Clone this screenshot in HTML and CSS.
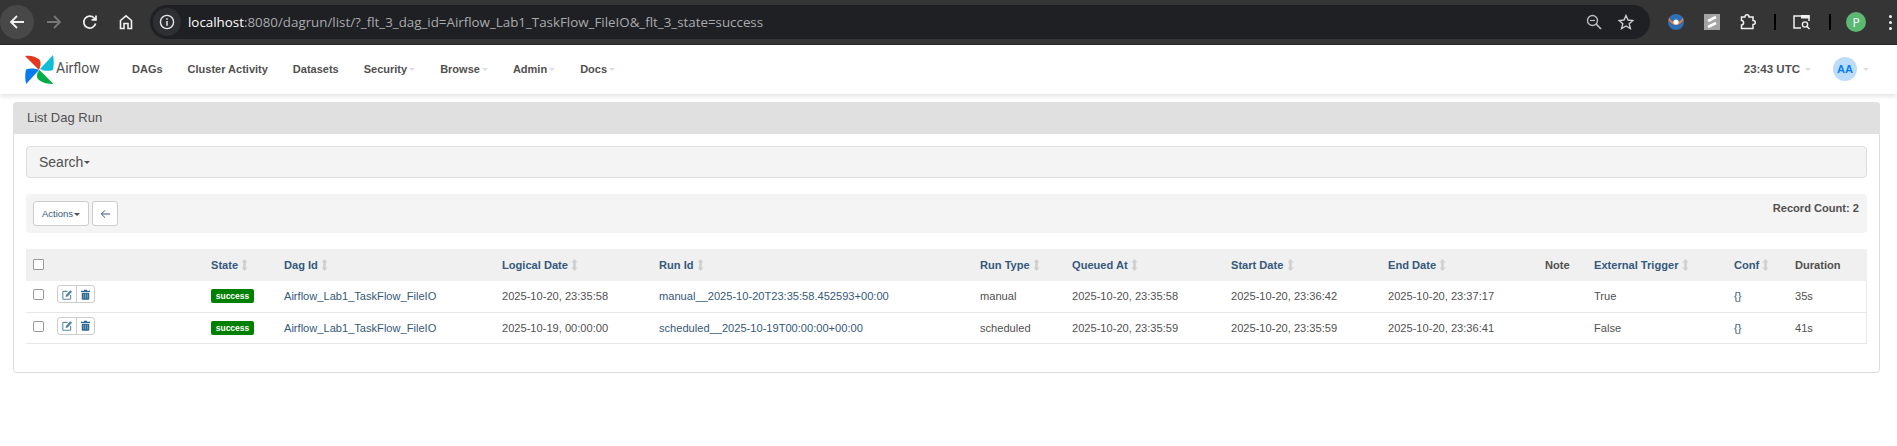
FILE: index.html
```html
<!DOCTYPE html>
<html>
<head>
  <title>List Dag Run</title>
  <link rel="stylesheet" href="styles.css">
</head>
<body>

  <svg class="defs">
    <defs>
      <symbol id="sort" viewBox="0 0 7 14">
        <path d="M3.5 0 L7 4 H5 V10 H7 L3.5 14 L0 10 H2 V4 H0 Z" fill="#cfcfcf"/>
      </symbol>
      <symbol id="edit" viewBox="0 0 14 14">
        <path d="M11 7.5 V12 Q11 13 10 13 H2 Q1 13 1 12 V4 Q1 3 2 3 H7" fill="none" stroke="#5b8cad" stroke-width="1.4"/>
        <path d="M5 7.5 L10.5 1.5 L12.8 3.6 L7.2 9.6 L4.6 10.1 Z" fill="#4f84a8"/>
      </symbol>
      <symbol id="trash" viewBox="0 0 12 14">
        <path d="M0 2 H4 V0.5 H8 V2 H12 V3.5 H0 Z M1 4.5 H11 V13 Q11 14 10 14 H2 Q1 14 1 13 Z" fill="#2f6a92"/>
        <path d="M3.5 6 V12 M6 6 V12 M8.5 6 V12" stroke="#9cbdd3" stroke-width="0.8"/>
      </symbol>
    </defs>
  </svg>

  <div class="chrome">
    <div class="chrome-nav">
      <span class="round-btn">
        <svg width="16" height="16" viewBox="0 0 16 16"><path d="M15 8 H2 M8 2 L2 8 L8 14" fill="none" stroke="#f1f1f1" stroke-width="1.8"/></svg>
      </span>
      <span class="plain-btn">
        <svg width="16" height="16" viewBox="0 0 16 16"><path d="M1 8 H14 M8 2 L14 8 L8 14" fill="none" stroke="#777" stroke-width="1.8"/></svg>
      </span>
      <span class="plain-btn">
        <svg width="16" height="16" viewBox="0 0 16 16"><path d="M13.6 9.5 A6 6 0 1 1 12 3.8 L14 5.6 M14 1.4 V5.8 H9.6" fill="none" stroke="#f1f1f1" stroke-width="1.7"/></svg>
      </span>
      <span class="plain-btn">
        <svg width="16" height="16" viewBox="0 0 16 16"><path d="M2.5 14.5 V6.5 L8 1.8 L13.5 6.5 V14.5 H10 V9.5 H6 V14.5 Z" fill="none" stroke="#f1f1f1" stroke-width="1.6"/></svg>
      </span>
    </div>
    <div class="omnibox">
      <span class="site-info">
        <svg width="16" height="16" viewBox="0 0 16 16"><circle cx="8" cy="8" r="6.6" fill="none" stroke="#e8e8e8" stroke-width="1.4"/><path d="M8 7 V11.8 M8 4.2 V5.8" stroke="#e8e8e8" stroke-width="1.5"/></svg>
      </span>
      <span class="url"><span class="url-host">localhost</span>:8080/dagrun/list/?_flt_3_dag_id=Airflow_Lab1_TaskFlow_FileIO&amp;_flt_3_state=success</span>
      <span class="omni-icons">
        <svg width="16" height="16" viewBox="0 0 16 16"><circle cx="6.5" cy="6.5" r="5" fill="none" stroke="#bbb" stroke-width="1.4"/><path d="M4 6.5 H9" stroke="#bbb" stroke-width="1.2"/><path d="M10.2 10.2 L15 15" stroke="#bbb" stroke-width="1.7"/></svg>
        <svg width="16" height="16" viewBox="0 0 16 16"><path d="M8 1.5 L10 6 L15 6.5 L11.2 9.8 L12.4 14.6 L8 12 L3.6 14.6 L4.8 9.8 L1 6.5 L6 6 Z" fill="none" stroke="#ccc" stroke-width="1.4"/></svg>
      </span>
    </div>
    <div class="chrome-ext">
      <svg class="ext" width="16" height="16" viewBox="0 0 16 16"><circle cx="8" cy="8" r="8" fill="#2f6fb5"/><path d="M1 3.5 Q3 8 8 8 Q13 8 15 3.5 L15.5 6 Q12 11 8 11 Q4 11 .5 6 Z" fill="#ef7f3a"/><circle cx="8" cy="8" r="2.6" fill="#fff"/></svg>
      <svg class="ext" width="16" height="16" viewBox="0 0 16 16"><rect width="16" height="16" fill="#a3a3a3"/><path d="M4 7 L12 3 M4 13 L12 9" stroke="#fff" stroke-width="2.6"/></svg>
      <svg class="ext ext-short" width="16" height="16" viewBox="0 0 16 16"><path d="M1.5 3 H5 Q5 .8 7 .8 Q9 .8 9 3 H13 V6.5 Q15.3 6.5 15.3 8.5 Q15.3 10.5 13 10.5 V14.5 H1.5 V11 Q3.6 11 3.6 8.8 Q3.6 6.6 1.5 6.6 Z" fill="none" stroke="#f1f1f1" stroke-width="1.5"/></svg>
      <span class="ext-divider"></span>
      <svg class="ext ext-short" width="18" height="16" viewBox="0 0 18 16"><path d="M8 14 H1 V2 H16 V7" fill="none" stroke="#f1f1f1" stroke-width="1.5"/><rect x="8" y="1" width="8.5" height="3.5" fill="#f1f1f1"/><circle cx="12" cy="10.5" r="2.6" fill="none" stroke="#f1f1f1" stroke-width="1.4"/><path d="M14 12.5 L16.5 15" stroke="#f1f1f1" stroke-width="1.5"/></svg>
      <span class="ext-divider ext-divider-last"></span>
      <span class="profile">P</span>
      <span class="dots"><i></i><i></i><i></i></span>
    </div>
  </div>

  <div class="navbar">
    <a class="brand">
      <svg width="29" height="29" viewBox="0 0 29 29">
        <path d="M0 1 L14 15 C16 10 16 7 14.500 4.500 C10 1 5 0 0 1 Z" fill="#e43921"/>
        <path d="M28 0 L15 14 C19 16 23 16.500 28 15 C29 10 29 5 28 0 Z" fill="#11bcd6"/>
        <path d="M28.500 29 L14.500 15 C11.500 18 11 23 14 25 C18 28 23 29 28.500 29 Z" fill="#00ad46"/>
        <path d="M1 29 L14 15 C10 13 5 13 1 14.500 C0 19 0 24 1 29 Z" fill="#017cee"/>
      </svg>
      <span class="brand-name">Airflow</span>
    </a>
    <ul class="menu">
      <li>DAGs</li>
      <li>Cluster Activity</li>
      <li>Datasets</li>
      <li class="has-caret">Security</li>
      <li class="has-caret">Browse</li>
      <li class="has-caret">Admin</li>
      <li class="has-caret">Docs</li>
    </ul>
    <div class="nav-right">
      <span class="clock has-caret">23:43 UTC</span>
      <span class="user has-caret"><span class="avatar">AA</span></span>
    </div>
  </div>

  <div class="main">
    <div class="panel">
      <div class="panel-heading">List Dag Run</div>
      <div class="panel-body">

        <div class="search-box"><span class="search-toggle">Search</span><span class="dark-caret"></span></div>

        <div class="actions-bar">
          <button class="btn btn-actions">Actions<span class="dark-caret"></span></button>
          <button class="btn btn-back">
            <svg width="10" height="10" viewBox="0 0 11 10"><path d="M11 5 H1.500 M5.500 1 L1.500 5 L5.500 9" fill="none" stroke="#35597c" stroke-width="1.100"/></svg>
          </button>
          <span class="record-count">Record Count: 2</span>
        </div>

        <table class="runs">
          <colgroup>
            <col class="c-check"><col class="c-act"><col class="c-state"><col class="c-dag"><col class="c-logical"><col class="c-run"><col class="c-type"><col class="c-queued"><col class="c-start"><col class="c-end"><col class="c-note"><col class="c-ext"><col class="c-conf"><col class="c-dur">
          </colgroup>
          <thead>
            <tr>
              <th><input class="cb cb-head" type="checkbox"></th>
              <th></th>
              <th class="lnk">State <svg class="sort"><use href="#sort"/></svg></th>
              <th class="lnk">Dag Id <svg class="sort"><use href="#sort"/></svg></th>
              <th class="lnk">Logical Date <svg class="sort"><use href="#sort"/></svg></th>
              <th class="lnk">Run Id <svg class="sort"><use href="#sort"/></svg></th>
              <th class="lnk">Run Type <svg class="sort"><use href="#sort"/></svg></th>
              <th class="lnk">Queued At <svg class="sort"><use href="#sort"/></svg></th>
              <th class="lnk">Start Date <svg class="sort"><use href="#sort"/></svg></th>
              <th class="lnk">End Date <svg class="sort"><use href="#sort"/></svg></th>
              <th>Note</th>
              <th class="lnk">External Trigger <svg class="sort"><use href="#sort"/></svg></th>
              <th class="lnk">Conf <svg class="sort"><use href="#sort"/></svg></th>
              <th>Duration</th>
            </tr>
          </thead>
          <tbody>
            <tr>
              <td><input class="cb" type="checkbox"></td>
              <td><span class="row-btns"><span><svg class="i-edit"><use href="#edit"/></svg></span><span><svg class="i-trash"><use href="#trash"/></svg></span></span></td>
              <td><span class="badge">success</span></td>
              <td class="lnk">Airflow_Lab1_TaskFlow_FileIO</td>
              <td>2025-10-20, 23:35:58</td>
              <td class="lnk">manual__2025-10-20T23:35:58.452593+00:00</td>
              <td>manual</td>
              <td>2025-10-20, 23:35:58</td>
              <td>2025-10-20, 23:36:42</td>
              <td>2025-10-20, 23:37:17</td>
              <td></td>
              <td>True</td>
              <td class="lnk">{}</td>
              <td>35s</td>
            </tr>
            <tr>
              <td><input class="cb" type="checkbox"></td>
              <td><span class="row-btns"><span><svg class="i-edit"><use href="#edit"/></svg></span><span><svg class="i-trash"><use href="#trash"/></svg></span></span></td>
              <td><span class="badge">success</span></td>
              <td class="lnk">Airflow_Lab1_TaskFlow_FileIO</td>
              <td>2025-10-19, 00:00:00</td>
              <td class="lnk">scheduled__2025-10-19T00:00:00+00:00</td>
              <td>scheduled</td>
              <td>2025-10-20, 23:35:59</td>
              <td>2025-10-20, 23:35:59</td>
              <td>2025-10-20, 23:36:41</td>
              <td></td>
              <td>False</td>
              <td class="lnk">{}</td>
              <td>41s</td>
            </tr>
          </tbody>
        </table>

      </div>
    </div>
  </div>

</body>
</html>
```

FILE: styles.css
```css
* {
  box-sizing: border-box;
}
html, body {
  margin: 0;
  padding: 0;
  height: 100%;
  overflow: hidden;
}
body {
  background-color: #fff;
  color: #51504f;
  font-family: "Liberation Sans", Arial, sans-serif;
  font-size: 11.100px;
}
.defs {
  display: none;
}

/* browser bar */
.chrome {
  display: flex;
  align-items: center;
  height: 45px;
  background-color: #353535;
  border-bottom: 1px solid #2a2a2a;
}
.chrome-nav {
  display: flex;
  align-items: center;
  width: 150px;
}
.round-btn, .plain-btn {
  display: flex;
  align-items: center;
  justify-content: center;
  width: 36px;
  height: 34px;
}
.round-btn {
  width: 34px;
  margin-right: 2px;
  border-radius: 50%;
  background-color: #484848;
}
.omnibox {
  display: flex;
  align-items: center;
  width: 1500px;
  height: 34px;
  border-radius: 17px;
  background-color: #1f2023;
}
.site-info {
  display: flex;
  align-items: center;
  justify-content: center;
  width: 28px;
  height: 28px;
  margin: 0 7px 0 3px;
  border-radius: 50%;
  background-color: #2e2f32;
}
.url {
  flex: 1;
  color: #a9abae;
  font-family: "Open Sans", sans-serif;
  font-size: 13.350px;
}
.url-host {
  color: #fff;
}
.omni-icons {
  display: flex;
  align-items: center;
  gap: 16px;
  margin-right: 16px;
}
.chrome-ext {
  display: flex;
  align-items: center;
  flex: 1;
  padding-left: 18px;
}
.ext {
  margin-right: 20px;
}
.ext-short {
  margin-right: 18px;
}
.ext-divider {
  width: 2px;
  height: 16px;
  margin-right: 17px;
  background-color: #000;
}
.ext-divider-last {
  margin-right: 15px;
}
.profile {
  display: flex;
  align-items: center;
  justify-content: center;
  width: 20px;
  height: 20px;
  margin-right: 23px;
  border-radius: 50%;
  background-color: #5bb974;
  color: #fff;
  font-family: "Open Sans", sans-serif;
  font-size: 12px;
}
.dots {
  display: flex;
  flex-direction: column;
  gap: 3px;
}
.dots i {
  width: 3px;
  height: 3px;
  background-color: #f1f1f1;
  border-radius: 50%;
}

/* airflow navbar */
.navbar {
  display: flex;
  align-items: center;
  height: 49px;
  padding: 0 0 0 25px;
  background-color: #fff;
  box-shadow: 0 2px 5px rgba(0, 0, 0, 0.12);
}
.brand {
  display: flex;
  align-items: center;
  width: 107px;
  color: #51504f;
}
.brand-name {
  margin-left: 2px;
  padding-bottom: 3px;
  font-family: Roboto, sans-serif;
  font-size: 14px;
}
.menu {
  display: flex;
  flex: 1;
  margin: 0;
  padding: 0 0 2px;
  list-style: none;
  font-size: 11px;
  font-weight: bold;
}
.menu li {
  margin-right: 25px;
}
.has-caret::after {
  content: "";
  display: inline-block;
  margin-left: 2px;
  vertical-align: middle;
  border-top: 3px solid #e6d9e6;
  border-left: 3px solid transparent;
  border-right: 3px solid transparent;
}
.nav-right {
  display: flex;
  align-items: center;
  padding: 0 28px 2px 0;
}
.clock {
  margin-right: 22px;
  font-size: 11.500px;
  font-weight: bold;
}
.clock::after {
  margin-left: 5px;
}
.user::after {
  margin-left: 6px;
}
.avatar {
  display: inline-block;
  width: 24px;
  height: 24px;
  line-height: 24px;
  border-radius: 50%;
  background-color: #bcdcfb;
  color: #017cee;
  font-size: 11px;
  font-weight: bold;
  text-align: center;
}

/* page content */
.main {
  padding: 8px 17px 0 13px;
}
.panel {
  height: 271px;
  border: 1px solid #ddd;
  border-radius: 4px;
}
.panel-heading {
  height: 32px;
  margin: -1px -1px 0;
  padding-left: 14px;
  border-radius: 4px 4px 0 0;
  background-color: #e0e0e0;
  font-size: 13px;
  line-height: 32px;
}
.panel-body {
  padding: 12px 12px 0;
}
.search-box {
  display: flex;
  align-items: center;
  height: 32px;
  padding-left: 12px;
  border: 1px solid #ddd;
  border-radius: 4px;
  background-color: #f4f4f4;
  font-size: 14px;
}
.dark-caret {
  display: inline-block;
  margin-left: 1px;
  vertical-align: middle;
  border-top: 3px solid #51504f;
  border-left: 3px solid transparent;
  border-right: 3px solid transparent;
}
.actions-bar {
  display: flex;
  align-items: center;
  height: 39px;
  margin-top: 16px;
  padding: 0 8px 0 7px;
  border-radius: 4px;
  background-color: #f4f4f4;
}
.btn {
  height: 25px;
  padding: 0;
  border: 1px solid #ccc;
  border-radius: 3px;
  background-color: #fff;
  color: #35597c;
  font-family: inherit;
  font-size: 9.500px;
}
.btn-actions {
  width: 56px;
  margin-right: 3px;
}
.btn-back {
  display: flex;
  align-items: center;
  justify-content: center;
  width: 26px;
}
.record-count {
  margin-left: auto;
  margin-bottom: 11px;
  font-weight: bold;
}
.runs {
  width: 100%;
  margin-top: 16px;
  border-collapse: collapse;
  table-layout: fixed;
}
.c-check { width: 31px; }
.c-act { width: 146px; }
.c-state { width: 73px; }
.c-dag { width: 218px; }
.c-logical { width: 157px; }
.c-run { width: 321px; }
.c-type { width: 92px; }
.c-queued { width: 159px; }
.c-start { width: 157px; }
.c-end { width: 157px; }
.c-note { width: 49px; }
.c-ext { width: 140px; }
.c-conf { width: 61px; }
.c-dur { width: auto; }
.runs th {
  height: 32px;
  padding: 0 8px;
  background-color: #f0f0f0;
  font-weight: bold;
  text-align: left;
  white-space: nowrap;
}
.runs td {
  height: 31px;
  padding: 0 8px;
  border-bottom: 1px solid #e8e8e8;
  white-space: nowrap;
}
.runs tr td:last-child {
  border-right: 1px solid #e8e8e8;
}
.runs .lnk {
  color: #35597c;
}
.sort {
  width: 7px;
  height: 12px;
  vertical-align: -2px;
}
.cb {
  display: block;
  width: 11px;
  height: 11px;
  margin: 0 0 3px -1px;
  appearance: none;
  border: 1px solid #999;
  border-radius: 2px;
  background-color: #fff;
}
.cb-head {
  margin-bottom: 2px;
  border-radius: 1px;
}
.row-btns {
  display: inline-flex;
  height: 18px;
  margin: 0 0 4px -8px;
  border: 1px solid #ccc;
  border-radius: 3px;
  background-color: #fff;
}
.row-btns span {
  display: flex;
  align-items: center;
  justify-content: center;
  width: 18px;
}
.row-btns span + span {
  border-left: 1px solid #ccc;
}
.i-edit {
  width: 11px;
  height: 11px;
}
.i-trash {
  width: 9px;
  height: 11px;
}
.badge {
  display: inline-block;
  width: 43px;
  height: 14px;
  border-radius: 2px;
  background-color: #008000;
  color: #fff;
  font-size: 8.500px;
  font-weight: bold;
  line-height: 14px;
  text-align: center;
}
```
